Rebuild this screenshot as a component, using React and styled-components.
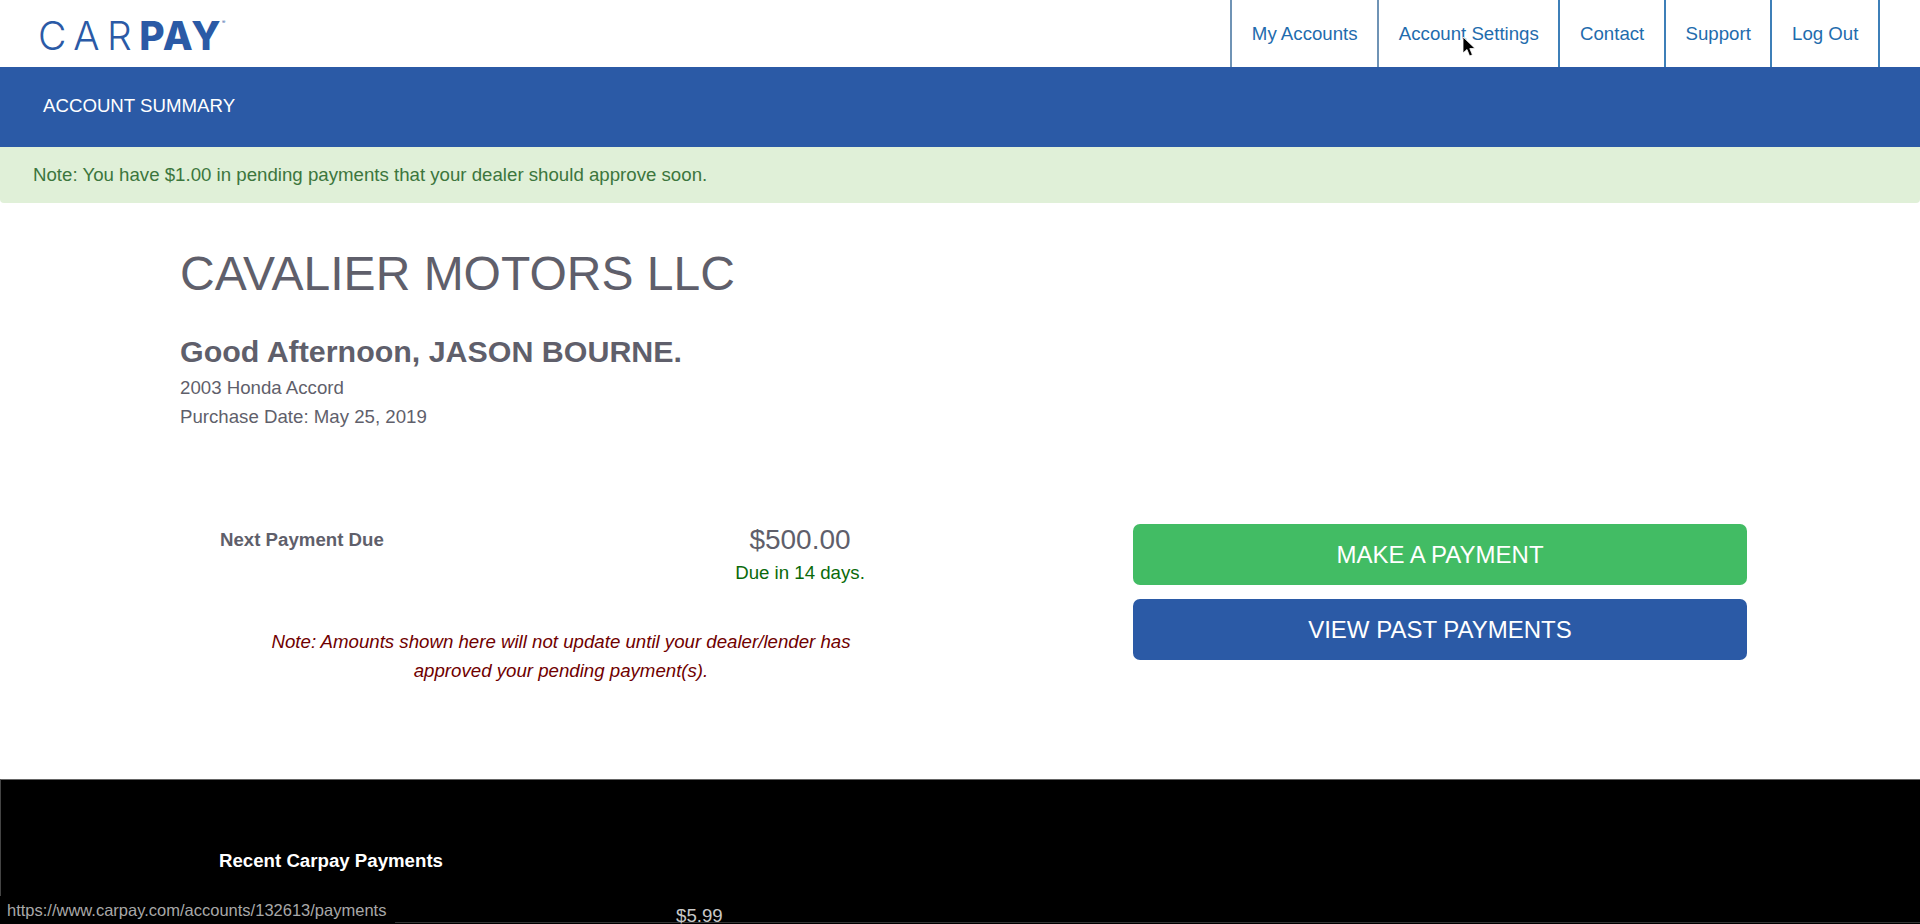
import React from 'react';
import styled, { createGlobalStyle } from 'styled-components';

const blue = '#2b5aa6';
const grey = '#5f5f6b';

const GlobalStyle = createGlobalStyle`
  html, body {
    margin: 0;
    padding: 0;
    background: #fff;
    overflow: hidden;
  }
  * {
    box-sizing: border-box;
  }
`;

const Page = styled.div`
  position: relative;
  height: 924px;
  overflow: hidden;
  font-family: "Liberation Sans", Arial, sans-serif;
  font-size: 18.66px;
  color: ${grey};
`;

const Header = styled.header`
  display: flex;
  justify-content: space-between;
  height: 67px;
  padding: 0 40px 0 38px;
`;

const Logo = styled.a`
  display: flex;
  align-items: flex-start;
  padding-top: 13px;
  font-family: Inter, sans-serif;
  font-size: 39px;
  line-height: 46px;
  color: ${blue};
`;

const LogoLight = styled.span`
  font-weight: 300;
  letter-spacing: 7.5px;
`;

const LogoBold = styled.span`
  font-weight: 800;
  letter-spacing: 1.5px;
`;

const LogoMark = styled.span`
  font-size: 5px;
  line-height: 18px;
`;

const Nav = styled.nav`
  display: flex;
  border-right: 2px solid #3d7fb8;
`;

const NavLink = styled.a`
  display: flex;
  align-items: center;
  padding: 1px 19.6px 0;
  border-left: 2px solid ${p => (p.$muted ? '#6f93b5' : '#3d7fb8')};
  color: #1f6cad;
  font-size: 18.66px;
`;

const TitleBar = styled.div`
  height: 80px;
  padding: 27px 43px 0;
  background: ${blue};
  color: #fff;
  font-size: 18.66px;
  line-height: 24px;
`;

const Alert = styled.div`
  height: 56px;
  padding: 0 33px;
  background: #e0f0d8;
  border-radius: 0 0 4px 4px;
  color: #3c763d;
  font-size: 18.66px;
  line-height: 55px;
`;

const Main = styled.main`
  height: 576px;
  padding: 44px 174px 0 180px;
`;

const Dealer = styled.h1`
  margin: 0;
  color: ${grey};
  font-size: 48px;
  font-weight: 400;
  line-height: 54px;
`;

const Greeting = styled.h2`
  margin: 32px 0 0;
  font-size: 30.4px;
  font-weight: 700;
  line-height: 36px;
`;

const Detail = styled.div`
  line-height: 29.4px;
`;

const Details = styled.div`
  margin-top: 4px;
`;

const Summary = styled.section`
  display: grid;
  grid-template-columns: 953px 614px;
  margin-top: 92px;
`;

const PaymentColumn = styled.div`
  padding-left: 40px;
`;

const PaymentRow = styled.div`
  display: grid;
  grid-template-columns: 400px 360px;
  padding-top: 1px;
`;

const PaymentLabel = styled.div`
  padding-top: 3px;
  font-weight: 700;
  line-height: 24px;
`;

const PaymentAmount = styled.div`
  text-align: center;
  font-size: 28px;
  line-height: 30px;
`;

const DueNote = styled.div`
  margin-top: 6px;
  color: #0a6a0a;
  font-size: 18.66px;
  line-height: 24px;
`;

const PendingNote = styled.p`
  width: 600px;
  margin: 42px 0 0 41px;
  color: #700000;
  font-style: italic;
  line-height: 29.4px;
  text-align: center;
`;

const Actions = styled.div`
  display: flex;
  flex-direction: column;
  gap: 13.5px;
`;

const ActionButton = styled.a`
  display: flex;
  align-items: center;
  justify-content: center;
  height: 61.5px;
  border-radius: 7px;
  background: ${p => p.$bg};
  color: #fff;
  font-size: 24px;
`;

const Recent = styled.section`
  height: 200px;
  padding: 70px 0 0 218px;
  background: #000;
  border-top: 1px solid #666;
  border-left: 1px solid #444;
`;

const RecentTitle = styled.h3`
  margin: 0;
  color: #fff;
  font-size: 18.66px;
  font-weight: 700;
  line-height: 22px;
`;

const RecentRow = styled.div`
  margin: 32px 0 0 -218px;
  padding-left: 675px;
  height: 19px;
  border-bottom: 1px solid #333;
  color: #c8c8c8;
  line-height: 24px;
`;

const StatusBar = styled.div`
  position: absolute;
  left: 0;
  bottom: 0;
  width: 395px;
  height: 28px;
  padding: 0 7px;
  background: #000;
  color: #a8a8a8;
  font-size: 16.5px;
  line-height: 28px;
`;

const Cursor = styled.svg`
  position: absolute;
  left: 1462px;
  top: 36px;
`;

export default function App() {
  return (
    <Page>
      <GlobalStyle />
      <Header>
        <Logo>
          <LogoLight>CAR</LogoLight>
          <LogoBold>PAY</LogoBold>
          <LogoMark>®</LogoMark>
        </Logo>
        <Nav>
          <NavLink $muted>My Accounts</NavLink>
          <NavLink $muted>Account Settings</NavLink>
          <NavLink>Contact</NavLink>
          <NavLink>Support</NavLink>
          <NavLink>Log Out</NavLink>
        </Nav>
      </Header>
      <TitleBar>ACCOUNT SUMMARY</TitleBar>
      <Alert>Note: You have $1.00 in pending payments that your dealer should approve soon.</Alert>
      <Main>
        <Dealer>CAVALIER MOTORS LLC</Dealer>
        <Greeting>Good Afternoon, JASON BOURNE.</Greeting>
        <Details>
          <Detail>2003 Honda Accord</Detail>
          <Detail>Purchase Date: May 25, 2019</Detail>
        </Details>
        <Summary>
          <PaymentColumn>
            <PaymentRow>
              <PaymentLabel>Next Payment Due</PaymentLabel>
              <PaymentAmount>
                $500.00
                <DueNote>Due in 14 days.</DueNote>
              </PaymentAmount>
            </PaymentRow>
            <PendingNote>
              Note: Amounts shown here will not update until your dealer/lender has approved your pending payment(s).
            </PendingNote>
          </PaymentColumn>
          <Actions>
            <ActionButton $bg="#42bc64">MAKE A PAYMENT</ActionButton>
            <ActionButton $bg={blue}>VIEW PAST PAYMENTS</ActionButton>
          </Actions>
        </Summary>
      </Main>
      <Recent>
        <RecentTitle>Recent Carpay Payments</RecentTitle>
        <RecentRow>$5.99</RecentRow>
      </Recent>
      <StatusBar>https://www.carpay.com/accounts/132613/payments</StatusBar>
      <Cursor width="14" height="22" viewBox="0 0 14 22">
        <path d="M1 1 L1 17 L5 13.5 L7.6 20 L10.4 18.8 L7.8 12.6 L13 12.4 Z" fill="#000" stroke="#fff" strokeWidth="0.8" />
      </Cursor>
    </Page>
  );
}
